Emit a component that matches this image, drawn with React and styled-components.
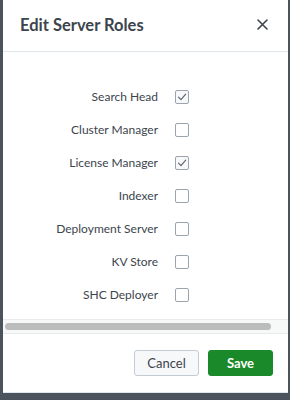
import React, { useState } from "react";
import styled, { createGlobalStyle } from "styled-components";

const roles = [
  { name: "Search Head", checked: true },
  { name: "Cluster Manager", checked: false },
  { name: "License Manager", checked: true },
  { name: "Indexer", checked: false },
  { name: "Deployment Server", checked: false },
  { name: "KV Store", checked: false },
  { name: "SHC Deployer", checked: false },
];

export default function App() {
  const [items, setItems] = useState(roles);

  const toggle = (name) => {
    setItems(
      items.map((item) =>
        item.name === name ? { ...item, checked: !item.checked } : item
      )
    );
  };

  return (
    <>
      <GlobalStyle />
      <Page>
        <Modal>
          <Header>
            <Title>Edit Server Roles</Title>
            <CloseButton aria-label="Close">
              <svg width="11" height="11" viewBox="0 0 11 11">
                <path
                  d="M1 1 L10 10 M10 1 L1 10"
                  stroke="#3c444d"
                  strokeWidth="1.6"
                  strokeLinecap="round"
                />
              </svg>
            </CloseButton>
          </Header>
          <Body>
            <RoleGrid>
              {items.map((item) => (
                <React.Fragment key={item.name}>
                  <Label>{item.name}</Label>
                  <Checkbox
                    $checked={item.checked}
                    onClick={() => toggle(item.name)}
                  >
                    {item.checked && (
                      <svg width="10" height="10" viewBox="0 0 10 10">
                        <path
                          d="M1.5 5.2 L4 7.7 L8.7 2.2"
                          fill="none"
                          stroke="#5c6773"
                          strokeWidth="1.2"
                          strokeLinecap="round"
                          strokeLinejoin="round"
                        />
                      </svg>
                    )}
                  </Checkbox>
                </React.Fragment>
              ))}
            </RoleGrid>
          </Body>
          <ScrollTrack>
            <ScrollThumb />
          </ScrollTrack>
          <Footer>
            <CancelButton>Cancel</CancelButton>
            <SaveButton>Save</SaveButton>
          </Footer>
        </Modal>
      </Page>
    </>
  );
}

const GlobalStyle = createGlobalStyle`
  body {
    margin: 0;
    background-color: #4b535c;
    font-family: "Lato", "Open Sans", sans-serif;
  }
`;

const Page = styled.div`
  width: 290px;
  height: 400px;
  padding: 0 2px 7px 3px;
  box-sizing: border-box;
`;

const Modal = styled.div`
  background-color: #ffffff;
  height: 393px;
  display: flex;
  flex-direction: column;
  border-bottom: 1px solid #e1e6eb;
  box-sizing: border-box;
`;

const Header = styled.div`
  height: 52px;
  flex-shrink: 0;
  display: flex;
  align-items: center;
  justify-content: space-between;
  padding: 0 20px 2px 17px;
  box-sizing: border-box;
  border-bottom: 1px solid #e1e6eb;
`;

const Title = styled.h2`
  margin: 0;
  font-size: 16.5px;
  font-weight: 700;
  color: #3c444d;
`;

const CloseButton = styled.button`
  background: none;
  border: none;
  padding: 0;
  display: flex;
  cursor: pointer;
`;

const Body = styled.div`
  flex: 1;
  padding-top: 28px;
`;

const RoleGrid = styled.div`
  display: grid;
  grid-template-columns: 155px 14px;
  grid-auto-rows: 33px;
  column-gap: 17px;
  align-items: center;
`;

const Label = styled.span`
  text-align: right;
  font-size: 12px;
  color: #3c444d;
`;

const Checkbox = styled.span`
  width: 14px;
  height: 14px;
  box-sizing: border-box;
  border: 1px solid #9aa4ae;
  border-radius: 2px;
  background-color: ${(p) => (p.$checked ? "#f7f8fa" : "#ffffff")};
  display: flex;
  align-items: center;
  justify-content: center;
  cursor: pointer;
`;

const ScrollTrack = styled.div`
  height: 13px;
  flex-shrink: 0;
  background-color: #f7f8f8;
  border-top: 1px solid #e8eaec;
  border-bottom: 1px solid #e8eaec;
  display: flex;
  align-items: center;
  padding: 0 17px 0 2px;
  margin-bottom: 16px;
`;

const ScrollThumb = styled.div`
  flex: 1;
  height: 7px;
  border-radius: 4px;
  background-color: #bcbcbc;
`;

const Footer = styled.div`
  display: flex;
  justify-content: flex-end;
  gap: 9px;
  padding: 0 15px 16px 0;
`;

const CancelButton = styled.button`
  width: 65px;
  height: 26px;
  box-sizing: border-box;
  border: 1px solid #c3cbd4;
  border-radius: 3px;
  background-color: #f7f8fa;
  color: #3c444d;
  font-family: "Lato", "Open Sans", sans-serif;
  font-size: 13px;
  cursor: pointer;
`;

const SaveButton = styled.button`
  width: 65px;
  height: 26px;
  box-sizing: border-box;
  border: 1px solid #1a8929;
  border-radius: 3px;
  background-color: #1a8929;
  color: #ffffff;
  font-family: "Lato", "Open Sans", sans-serif;
  font-weight: 700;
  font-size: 13px;
  cursor: pointer;
`;
